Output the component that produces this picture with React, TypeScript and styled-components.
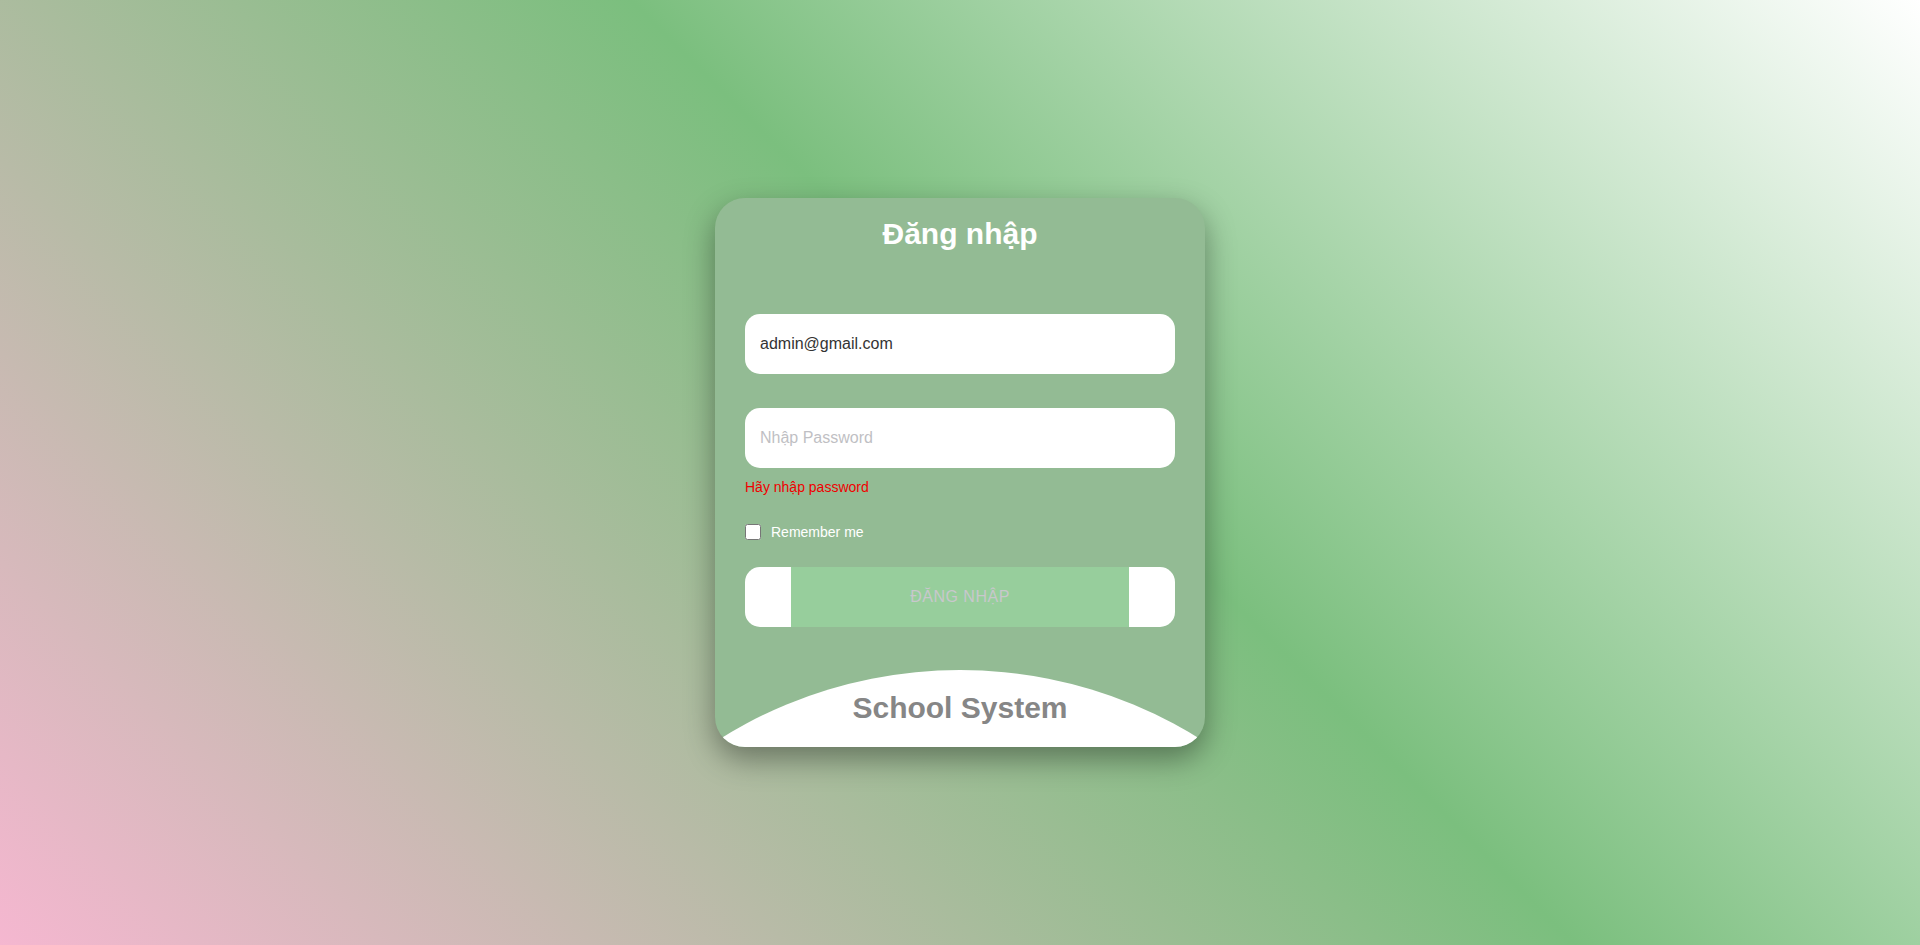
import React from "react";
import styled, { createGlobalStyle } from "styled-components";

const GlobalStyle = createGlobalStyle`
  html, body { margin: 0; padding: 0; }
  body { font-family: "Liberation Sans", Arial, sans-serif; }
  * { box-sizing: border-box; }
`;

const Page = styled.div`
  width: 100%;
  height: 100vh;
  display: flex;
  align-items: center;
  justify-content: center;
  background: linear-gradient(45deg, #f5b7d0 0%, #7bbf7e 55%, #ffffff 100%);
`;

const Card = styled.form`
  width: 490px;
  height: 549px;
  display: flex;
  flex-direction: column;
  background: #93bb94;
  border-radius: 30px;
  overflow: hidden;
  box-shadow: 0 12px 30px rgba(0, 0, 0, 0.38);
  padding-top: 19px;
`;

const Title = styled.h2`
  margin: 0;
  font-size: 30px;
  line-height: 34px;
  font-weight: 700;
  color: #ffffff;
  text-align: center;
`;

const Body = styled.div`
  display: flex;
  flex-direction: column;
  padding: 0 30px;
  margin-top: 63px;
`;

const Field = styled.input`
  width: 100%;
  height: 60px;
  border: none;
  outline: none;
  border-radius: 15px;
  padding: 0 15px;
  font-family: "Liberation Sans", Arial, sans-serif;
  font-size: 16px;
  color: #333333;
  background: #ffffff;
  & + & { margin-top: 34px; }
  &::placeholder { color: #bfbfc4; }
`;

const ErrorText = styled.div`
  margin-top: 11px;
  font-size: 14px;
  line-height: 16px;
  color: #f00000;
`;

const RememberRow = styled.label`
  display: flex;
  align-items: center;
  gap: 10px;
  margin-top: 29px;
  font-size: 14px;
  line-height: 16px;
  color: #ffffff;
`;

const Check = styled.input`
  width: 16px;
  height: 16px;
  margin: 0;
`;

const SubmitButton = styled.button`
  margin-top: 27px;
  width: 100%;
  height: 60px;
  border: none;
  border-radius: 15px;
  background: #ffffff;
  padding: 0 46px;
  display: flex;
  overflow: hidden;
  cursor: pointer;
`;

const SubmitInner = styled.span`
  flex: 1;
  display: flex;
  align-items: center;
  justify-content: center;
  background: #97ce9c;
  font-family: "Liberation Sans", Arial, sans-serif;
  font-size: 16px;
  letter-spacing: 0.5px;
  color: #c8c8cc;
`;

const Footer = styled.div`
  position: relative;
  flex: 1;
  padding-top: 64px;
  text-align: center;
  &::before {
    content: "";
    position: absolute;
    left: 50%;
    top: 43px;
    width: 906px;
    height: 906px;
    margin-left: -453px;
    border-radius: 50%;
    background: #ffffff;
  }
`;

const Brand = styled.div`
  position: relative;
  font-size: 30px;
  line-height: 34px;
  font-weight: 700;
  color: #868686;
`;

export default function App() {
  return (
    <>
      <GlobalStyle />
      <Page>
        <Card onSubmit={(e) => e.preventDefault()}>
          <Title>Đăng nhập</Title>
          <Body>
            <Field type="email" defaultValue="admin@gmail.com" />
            <Field type="password" placeholder="Nhập Password" />
            <ErrorText>Hãy nhập password</ErrorText>
            <RememberRow>
              <Check type="checkbox" />
              Remember me
            </RememberRow>
            <SubmitButton type="submit">
              <SubmitInner>ĐĂNG NHẬP</SubmitInner>
            </SubmitButton>
          </Body>
          <Footer>
            <Brand>School System</Brand>
          </Footer>
        </Card>
      </Page>
    </>
  );
}
